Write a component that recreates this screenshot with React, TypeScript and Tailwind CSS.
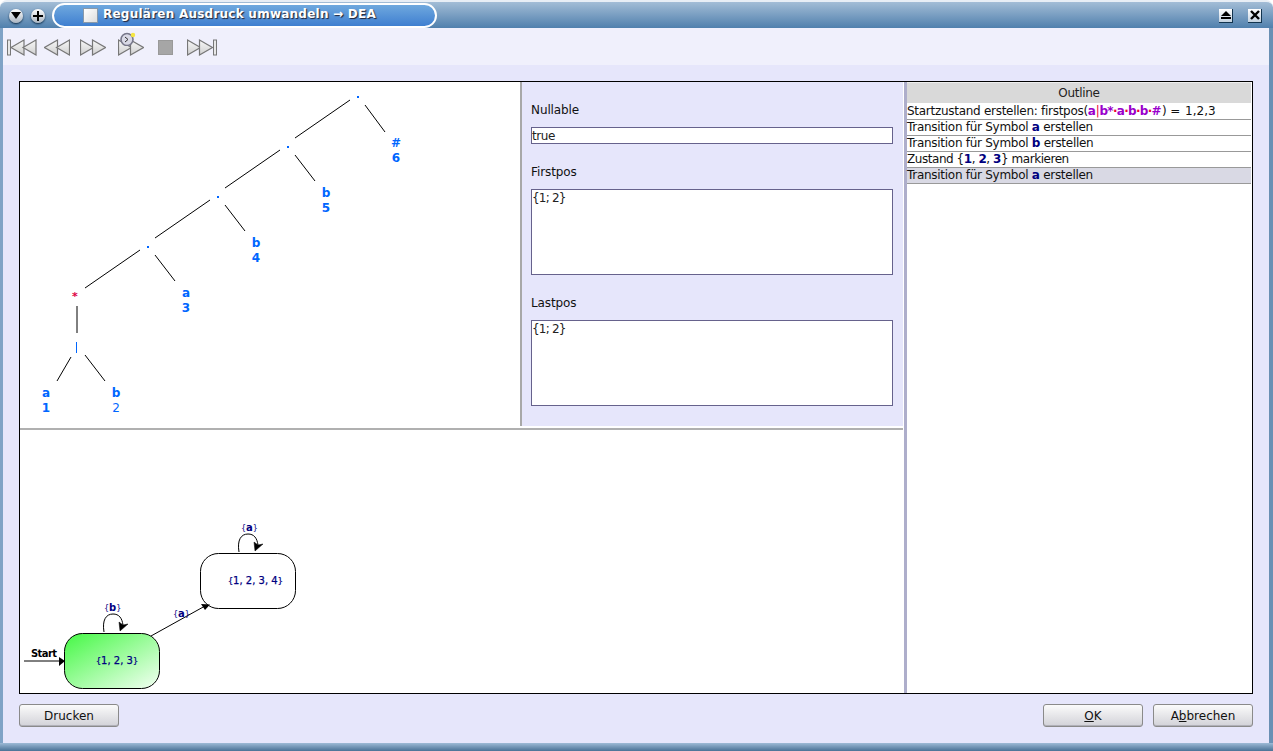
import type { ReactNode } from "react";

const edges = [
  [350, 100, 295, 138],
  [365, 105, 385, 132],
  [295, 155, 315, 181],
  [280, 150, 225, 188],
  [225, 205, 245, 231],
  [210, 200, 155, 238],
  [155, 255, 175, 281],
  [140, 250, 85, 288],
  [77, 306, 77, 333],
  [71, 357, 57, 381],
  [85, 355, 105, 381],
];

const leaves = [
  { x: 396, y: 147, sym: "#", pos: "6" },
  { x: 326, y: 197, sym: "b", pos: "5" },
  { x: 256, y: 247, sym: "b", pos: "4" },
  { x: 186, y: 297, sym: "a", pos: "3" },
  { x: 46, y: 397, sym: "a", pos: "1" },
  { x: 116, y: 397, sym: "b", pos: "2" },
];

function SyntaxTree() {
  return (
    <svg viewBox="20 82 500 344" className="block h-full w-full" style={{ fontFamily: "'DejaVu Sans', sans-serif" }}>
      {edges.map(([x1, y1, x2, y2], i) => (
        <line key={i} x1={x1} y1={y1} x2={x2} y2={y2} stroke="#000" strokeWidth="1" />
      ))}
      {[[358, 97], [288, 147], [218, 197], [148, 247]].map(([x, y]) => (
        <rect key={x} x={x - 1} y={y - 1} width="2" height="2" fill="#0066ff" />
      ))}
      <text x="75" y="300" textAnchor="middle" fontSize="11" fontWeight="700" fill="#dd0044">*</text>
      <rect x="76" y="342" width="1" height="11" fill="#0066ff" />
      {leaves.map((l) => (
        <g key={l.pos} fontSize="12" fontWeight="700" fill="#0066ff" textAnchor="middle">
          <text x={l.x} y={l.y}>{l.sym}</text>
          <text x={l.x} y={l.y + 15} fontWeight={l.pos === "2" ? 400 : 700}>{l.pos}</text>
        </g>
      ))}
    </svg>
  );
}

// braces are much narrower than the digits in the original, so they get a smaller size
function StateName({ nums, x, y }: { nums: string[]; x: number; y: number }) {
  return (
    <text x={x} y={y} fontSize="10" fill="#000080" stroke="#000080" strokeWidth="0.25">
      <tspan fontSize="8">{"{"}</tspan>
      {nums.map((n, i) => (
        <tspan key={n}>{n}{i < nums.length - 1 ? ", " : ""}</tspan>
      ))}
      <tspan fontSize="8">{"}"}</tspan>
    </text>
  );
}

function EdgeLabel({ sym, x, y }: { sym: string; x: number; y: number }) {
  return (
    <text x={x} y={y} fontSize="8" fill="#000080">
      {"{"}
      <tspan fontSize="10" fontWeight="700">{sym}</tspan>
      {"}"}
    </text>
  );
}

function Loop({ dx, dy }: { dx: number; dy: number }) {
  return (
    <g transform={`translate(${dx} ${dy})`}>
      <path d="M239 552 C237 540 241 534 248 534 C254 534 257 538 258 545" fill="none" stroke="#000" />
      <path d="M255 551 L263 544 L258 545 L254 542 Z" fill="#000" stroke="#000" strokeWidth="0.5" />
    </g>
  );
}

function Automaton() {
  return (
    <svg viewBox="20 430 883 263" className="block h-full w-full" style={{ fontFamily: "'DejaVu Sans', sans-serif" }}>
      <defs>
        <linearGradient id="startFill" x1="0" y1="0" x2="1" y2="1">
          <stop offset="0" stopColor="#44f844" />
          <stop offset="1" stopColor="#f4fff4" />
        </linearGradient>
      </defs>
      <rect x="64.5" y="633.5" width="95" height="55" rx="18" fill="url(#startFill)" stroke="#000" />
      <rect x="200.5" y="553.5" width="95" height="55" rx="18" fill="#fff" stroke="#000" />
      <StateName nums={["1", "2", "3"]} x={96} y={664} />
      <StateName nums={["1", "2", "3", "4"]} x={228} y={584} />

      <line x1="24" y1="661" x2="60" y2="661" stroke="#000" />
      <path d="M59 657 L65 661 L59 666 Z" fill="#000" />
      <text x="31" y="657" fontSize="10" fontWeight="700" fill="#000" letterSpacing="-0.6">Start</text>

      <line x1="151" y1="636" x2="205" y2="606" stroke="#000" />
      <path d="M210 604.5 L201 604 L205 610 Z" fill="#000" />
      <EdgeLabel sym="a" x={173} y={617} />

      <Loop dx={-135} dy={80} />
      <EdgeLabel sym="b" x={104} y={611} />
      <Loop dx={0} dy={0} />
      <EdgeLabel sym="a" x={241} y={531} />
    </svg>
  );
}

function Triangle({ x, dir }: { x: number; dir: 1 | -1 }) {
  const d = dir === 1 ? `M${x} 1 L${x + 13} 8.5 L${x} 16 Z` : `M${x + 13} 1 L${x} 8.5 L${x + 13} 16 Z`;
  return <path d={d} fill="url(#tool)" stroke="#777" strokeWidth="1.2" />;
}

function ToolIcon({ width, children }: { width: number; children: ReactNode }) {
  return (
    <svg width={width} height="17" viewBox={`0 0 ${width} 17`} className="block">
      <defs>
        <linearGradient id="tool" x1="0" y1="0" x2="0" y2="1">
          <stop offset="0" stopColor="#f8f8f8" />
          <stop offset="1" stopColor="#cfcfcf" />
        </linearGradient>
      </defs>
      {children}
    </svg>
  );
}

function Toolbar() {
  return (
    <div className="flex h-[37px] items-center bg-[#f0f0fc] pl-[4px] pt-[2px]">
      <ToolIcon width={30}>
        <rect x="0.5" y="1" width="3" height="15" fill="#e8e8e8" stroke="#777" />
        <Triangle x={4} dir={-1} />
        <Triangle x={16} dir={-1} />
      </ToolIcon>
      <div className="ml-[7px]">
        <ToolIcon width={26}>
          <Triangle x={0.5} dir={-1} />
          <Triangle x={12.5} dir={-1} />
        </ToolIcon>
      </div>
      <div className="ml-[10px]">
        <ToolIcon width={26}>
          <Triangle x={0.5} dir={1} />
          <Triangle x={12.5} dir={1} />
        </ToolIcon>
      </div>
      <div className="relative ml-[12px]">
        <ToolIcon width={26}>
          <Triangle x={0.5} dir={1} />
          <Triangle x={12.5} dir={1} />
        </ToolIcon>
        <svg width="17" height="14" viewBox="0 0 17 14" className="absolute left-[1px] top-[-7px]">
          <circle cx="8" cy="7.5" r="6" fill="#d9d9e6" stroke="#77778a" strokeWidth="1.6" />
          <path d="M6 5 L9 7.5 L6 10" fill="none" stroke="#333" />
          <circle cx="14" cy="3" r="2.2" fill="#f5e642" />
        </svg>
      </div>
      <div className="ml-[14px] h-[15px] w-[15px] border border-[#999] bg-[#a6a6a6]" />
      <div className="ml-[14px]">
        <ToolIcon width={30}>
          <Triangle x={0.5} dir={1} />
          <Triangle x={12.5} dir={1} />
          <rect x="26.5" y="1" width="3" height="15" fill="#e8e8e8" stroke="#777" />
        </ToolIcon>
      </div>
    </div>
  );
}

function TitleBar() {
  return (
    <div className="flex h-[28px] items-center rounded-t-[7px] border-t-2 border-t-[#e8eef5] bg-gradient-to-b from-[#a3bdd6] to-[#5080ad]">
      <button className="ml-[9px] mt-[1px] flex h-[14px] w-[14px] items-center justify-center rounded-full bg-gradient-to-b from-white to-[#aab4c0] shadow-[0_1px_2px_#0d2a45]">
        <svg width="10" height="7" viewBox="0 0 10 7" className="block">
          <path d="M0 0 H10 L5 7 Z" fill="#000" />
        </svg>
      </button>
      <button className="ml-[8px] mt-[1px] flex h-[14px] w-[14px] items-center justify-center rounded-full bg-gradient-to-b from-white to-[#aab4c0] shadow-[0_1px_2px_#0d2a45]">
        <svg width="10" height="10" viewBox="0 0 10 10" className="block">
          <path d="M4 0 H6 V4 H10 V6 H6 V10 H4 V6 H0 V4 H4 Z" fill="#000" />
        </svg>
      </button>
      <div className="ml-[7px] flex h-[25px] w-[385px] items-center rounded-full border-2 border-white bg-gradient-to-b from-[#6fa8de] to-[#3f7fd0] pl-[29px]">
        <span className="h-[15px] w-[15px] border border-[#8899aa] bg-gradient-to-br from-white to-[#dddddd]" />
        <span className="mb-[3px] ml-[5px] text-[12px] font-bold tracking-[0.24px] text-white [text-shadow:1px_1px_1px_#223]">
          Regulären Ausdruck umwandeln → DEA
        </span>
      </div>
      <button className="ml-auto mr-[15px] mt-[1px] flex h-[14px] w-[14px] flex-col items-center justify-center gap-[1px] border-b border-r border-[#12344f] bg-gradient-to-b from-white to-[#c4d2e0]">
        <span className="h-0 w-0 border-x-[5px] border-b-[5px] border-x-transparent border-b-black" />
        <span className="h-[2px] w-[10px] bg-black" />
      </button>
      <button className="mr-[11px] mt-[1px] flex h-[14px] w-[14px] items-center justify-center border-b border-r border-[#12344f] bg-gradient-to-b from-white to-[#c4d2e0]">
        <svg width="10" height="10" viewBox="0 0 10 10" className="block">
          <path d="M1 1 L9 9 M9 1 L1 9" stroke="#000" strokeWidth="2.4" />
        </svg>
      </button>
    </div>
  );
}

function Field({ label, value, tall }: { label: string; value: string; tall?: boolean }) {
  return (
    <div>
      <div className="h-[17px] text-[12px] leading-[17px] tracking-[-0.1px] text-[#111]">{label}</div>
      <div
        className={
          "mt-[8px] border border-[#66628c] bg-white pt-px text-[12px] leading-[15px] text-[#222] " +
          (tall ? "h-[86px] tracking-[-0.8px]" : "h-[17px] tracking-[-0.4px]")
        }
      >
        {value}
      </div>
    </div>
  );
}

function Sym({ children }: { children: ReactNode }) {
  return <b className="text-[#000080]">{children}</b>;
}

function Dot() {
  return <span className="text-[#ee0033]">·</span>;
}

function OutlineRow({ children, selected }: { children: ReactNode; selected?: boolean }) {
  return (
    <div
      className={
        "h-[16px] whitespace-nowrap border-b border-[#999] tracking-[-0.28px] " + (selected ? "bg-[#d9d9e4]" : "bg-white")
      }
    >
      {children}
    </div>
  );
}

function OutlinePanel() {
  return (
    <div className="mr-px flex-1 bg-white">
      <div className="flex h-[21px] items-center justify-center border-t border-t-[#eeeeee] bg-[#d9d9d9] text-[12px] tracking-[-0.3px] text-[#222]">
        Outline
      </div>
      <div className="h-px bg-white" />
      <div className="text-[12px] leading-[15px] text-[#111]">
        <OutlineRow>
          Startzustand erstellen: firstpos(
          <b className="text-[#9900cc]">a</b>
          <span className="text-[#ee0033]">|</span>
          <b className="text-[#9900cc] tracking-[-0.7px]">
            b*
            <Dot />a<Dot />b<Dot />b<Dot />#
          </b>
          <span className="ml-[1px]">)</span>
          <span className="ml-[4px]">=</span>
          <span className="ml-[5px] tracking-normal">1,2,3</span>
        </OutlineRow>
        <OutlineRow>
          Transition für Symbol <Sym>a</Sym> erstellen
        </OutlineRow>
        <OutlineRow>
          Transition für Symbol <Sym>b</Sym> erstellen
        </OutlineRow>
        <OutlineRow>
          <span className="tracking-[-0.45px]">
            Zustand {"{"}
            <Sym>1</Sym>, <Sym>2</Sym>, <Sym>3</Sym>
            {"}"} markieren
          </span>
        </OutlineRow>
        <OutlineRow selected>
          Transition für Symbol <Sym>a</Sym> erstellen
        </OutlineRow>
      </div>
    </div>
  );
}

function DialogButton({ children }: { children: ReactNode }) {
  return (
    <button className="h-[23px] w-[100px] rounded-[3px] border border-[#8a8a8a] bg-gradient-to-b from-[#fbfbfb] to-[#d2d2d8] text-[12px] text-[#111] shadow-[inset_0_-1px_0_#b0b0b8]">
      {children}
    </button>
  );
}

export default function App() {
  return (
    <div
      className="flex h-[751px] w-[1273px] flex-col overflow-hidden bg-white"
      style={{ fontFamily: "'DejaVu Sans', sans-serif" }}
    >
      <TitleBar />
      <div className="flex flex-1 flex-col border-l-[3px] border-r-[4px] border-l-[#7fa3c6] border-r-[#6a90b4] bg-[#e6e6fb]">
        <Toolbar />
        <div className="px-[16px] pt-[16px]">
          <div className="flex h-[613px] border border-black bg-white">
            <div className="flex w-[884px] flex-col pr-px">
              <div className="flex h-[344px]">
                <div className="w-[500px]">
                  <SyntaxTree />
                </div>
                <div className="flex-1 border-l-2 border-[#a8a8a8] bg-[#e6e6fb] pl-[9px] pr-[10px] pt-[20px]">
                  <Field label="Nullable" value="true" />
                  <div className="mt-[20px]">
                    <Field label="Firstpos" value="{1; 2}" tall />
                  </div>
                  <div className="mt-[20px]">
                    <Field label="Lastpos" value="{1; 2}" tall />
                  </div>
                </div>
              </div>
              <div className="mt-[2px] h-[2px] bg-[#b0b0b0]" />
              <div className="flex-1">
                <Automaton />
              </div>
            </div>
            <div className="w-[3px] bg-[#aeaecb]" />
            <OutlinePanel />
          </div>
          <div className="mt-[10px] flex gap-[10px]">
            <DialogButton>Drucken</DialogButton>
            <div className="flex-1" />
            <DialogButton>
              <u>O</u>K
            </DialogButton>
            <DialogButton>
              A<u>b</u>brechen
            </DialogButton>
          </div>
        </div>
      </div>
      <div className="h-[8px] bg-gradient-to-b from-[#9dbad6] to-[#4a7296]" />
    </div>
  );
}
